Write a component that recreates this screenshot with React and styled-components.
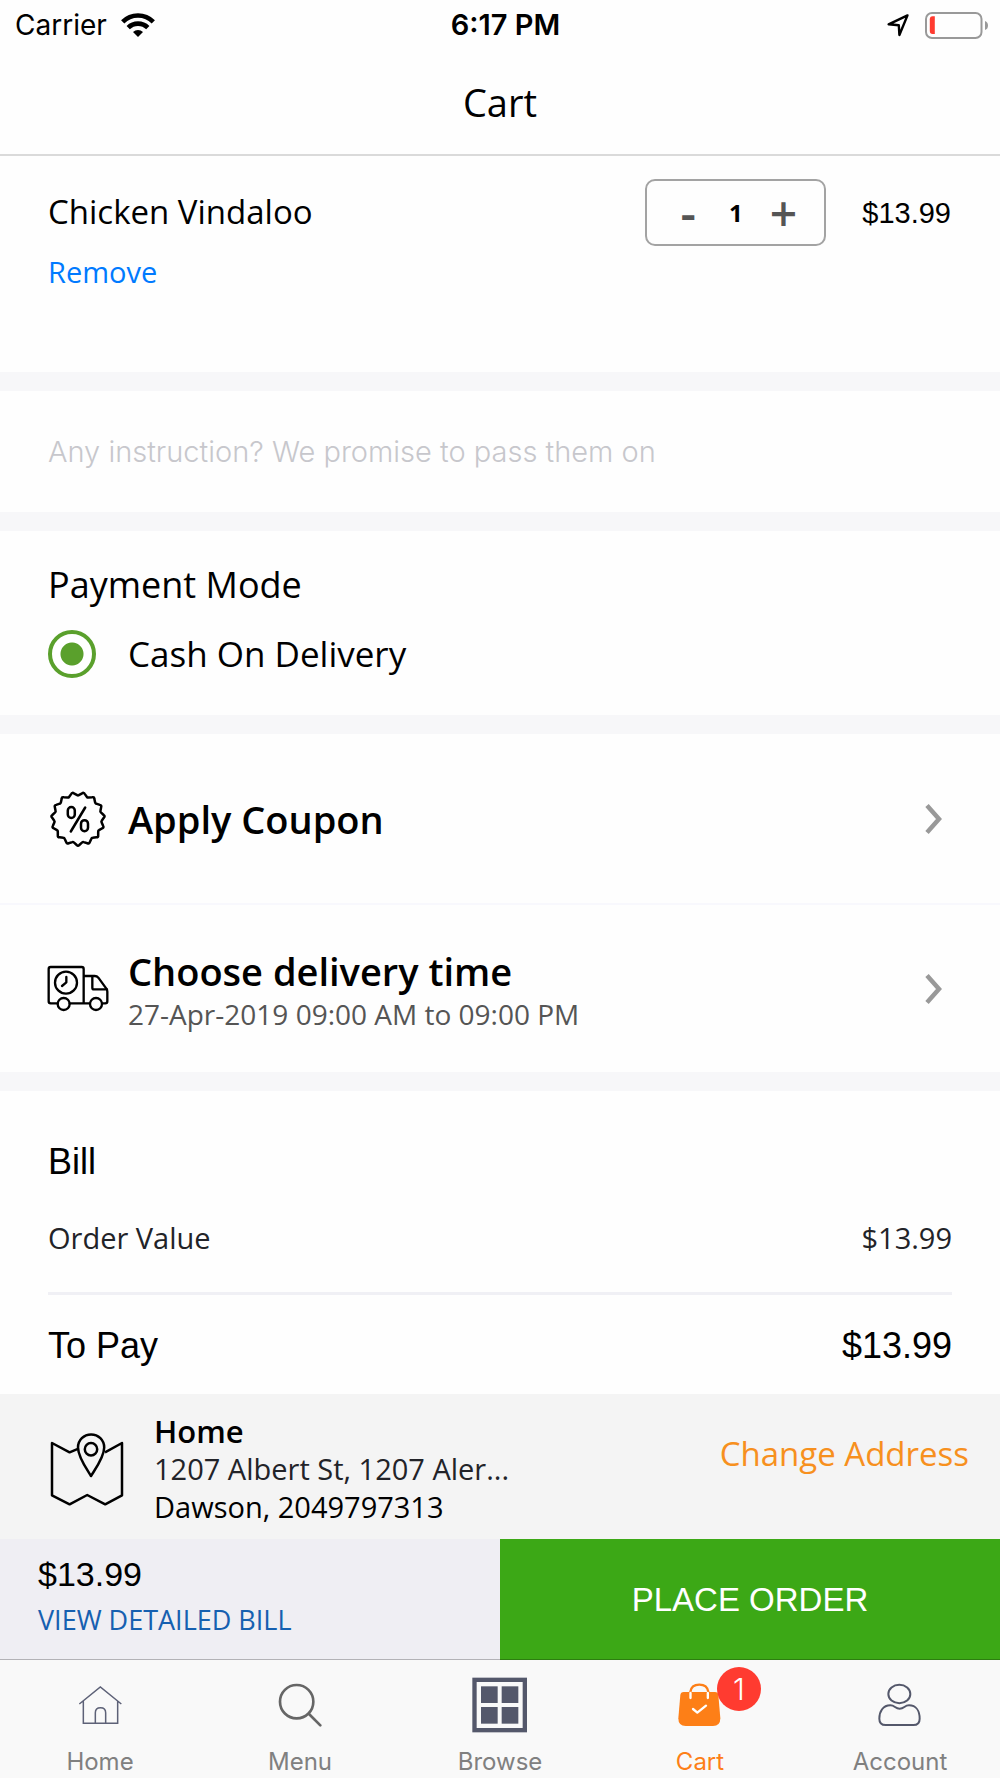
import React, { useState } from 'react';
import styled, { createGlobalStyle } from 'styled-components';

const sans = '"Open Sans", "Noto Sans", sans-serif';
const helvetica = '"Liberation Sans", Arial, sans-serif';
const system = 'Inter, Roboto, sans-serif';

const GlobalStyle = createGlobalStyle`
  *, *::before, *::after { box-sizing: border-box; }
  body { margin: 0; background: #fefefe; color: #000; font-family: ${sans}; }
  h1, h2, p, dl, dt, dd { margin: 0; font-weight: 400; }
  button { border: 0; padding: 0; background: none; color: inherit; font: inherit; cursor: pointer; }
  a { color: inherit; text-decoration: none; }
  svg { display: block; flex: none; }
`;

const Screen = styled.div`
  display: flex;
  flex-direction: column;
  min-height: 100vh;
`;

const StatusBar = styled.div`
  display: grid;
  grid-template-columns: 1fr auto 1fr;
  align-items: center;
  height: 50px;
  padding: 0 12px 0 15px;
  font: 400 28px/34px ${system};
`;

const StatusGroup = styled.div`
  display: flex;
  align-items: center;
  gap: 14px;
  justify-content: ${(p) => (p.$end ? 'flex-end' : 'flex-start')};
`;

const Clock = styled.time`
  padding-left: 8px;
  font-size: 29px;
  font-weight: 600;
`;

const Header = styled.header`
  display: flex;
  align-items: center;
  justify-content: center;
  height: 106px;
  border-bottom: 2px solid #dadada;
`;

const Title = styled.h1`
  font-size: 38px;
  line-height: 50px;
`;

const Content = styled.main`
  display: flex;
  flex-direction: column;
  gap: 19px;
  background: #f7f7f9;
`;

const Section = styled.section`
  background: #fefefe;
`;

const ItemSection = styled(Section)`
  display: flex;
  align-items: flex-start;
  gap: 36px;
  padding: 23px 49px 78px 48px;
`;

const ItemInfo = styled.div`
  display: flex;
  flex: 1;
  flex-direction: column;
  align-items: flex-start;
  gap: 16px;
  padding-top: 11px;
`;

const ItemName = styled.h2`
  font-size: 33px;
  line-height: 44px;
`;

const RemoveButton = styled.button`
  color: #007aff;
  font-size: 29px;
  line-height: 44px;
`;

const Stepper = styled.div`
  display: grid;
  grid-template-columns: repeat(3, 1fr);
  align-items: center;
  width: 181px;
  height: 67px;
  padding: 0 17px;
  border: 2px solid #a3a3a3;
  border-radius: 10px;
  text-align: center;
`;

const StepButton = styled.button`
  color: #555;
  font-size: 48px;
  font-weight: 600;
  line-height: 60px;
`;

const Quantity = styled.output`
  font-size: 24px;
  font-weight: 700;
  line-height: 60px;
`;

const ItemPrice = styled.span`
  font: 400 29px/69px ${helvetica};
`;

const InstructionInput = styled.input`
  display: block;
  width: 100%;
  height: 121px;
  padding: 0 48px;
  border: 0;
  outline: 0;
  background: transparent;
  color: #000;
  font: 300 29px/40px ${system};
  &::placeholder { color: #c7c7cc; opacity: 1; }
`;

const PaymentSection = styled(Section)`
  padding: 30px 48px 37px;
`;

const PaymentTitle = styled.h2`
  margin-bottom: 21px;
  font-size: 36px;
  line-height: 48px;
`;

const RadioLabel = styled.label`
  display: flex;
  align-items: center;
  gap: 32px;
  font-size: 35px;
  line-height: 48px;
`;

const Radio = styled.input`
  appearance: none;
  width: 48px;
  height: 48px;
  margin: 0;
  border: 4px solid #5aa02c;
  border-radius: 50%;
  background: #fff;
  &:checked { background: radial-gradient(circle, #5aa02c 11px, #fff 12px); }
`;

const OptionRow = styled.button`
  display: flex;
  align-items: center;
  gap: 20px;
  width: 100%;
  height: 169px;
  padding: 0 58px 0 48px;
  text-align: left;
  & + & { border-top: 2px solid #f8f8fd; }
`;

const OptionIcon = styled.span`
  display: flex;
  justify-content: center;
  width: 60px;
`;

const OptionText = styled.span`
  display: flex;
  flex: 1;
  flex-direction: column;
`;

const OptionTitle = styled.span`
  font-size: 38px;
  font-weight: 600;
  line-height: 50px;
`;

const OptionDetail = styled.span`
  color: #555;
  font-size: 28px;
  line-height: 36px;
`;

const BillSection = styled(Section)`
  padding: 49px 48px 26px;
`;

const BillTitle = styled.h2`
  font: 400 36px/44px ${helvetica};
`;

const BillRow = styled.div`
  display: flex;
  justify-content: space-between;
  padding: 32px 0;
  color: #222328;
  font-size: 29px;
  line-height: 44px;
`;

const TotalRow = styled(BillRow)`
  padding: 29px 0 0;
  border-top: 3px solid #f0f0f5;
  color: #000;
  font-family: ${helvetica};
  font-size: 36px;
`;

const AddressBar = styled.section`
  display: flex;
  align-items: center;
  gap: 28px;
  padding: 18px 31px 13px 48px;
  background: #f4f4f4;
`;

const Address = styled.address`
  flex: 1;
  font-size: 29px;
  font-style: normal;
  line-height: 38px;
`;

const AddressName = styled.h2`
  && { font-weight: 600; }
  font-size: 31px;
`;

const AddressStreet = styled.p`
  color: #222328;
`;

const ChangeLink = styled.a`
  margin-bottom: 30px;
  color: #f7901e;
  font-size: 33px;
  line-height: 44px;
`;

const Checkout = styled.div`
  display: grid;
  grid-template-columns: 1fr 1fr;
  height: 121px;
  background: #efeef3;
`;

const Summary = styled.div`
  padding: 12px 38px 0;
`;

const SummaryPrice = styled.p`
  font: 400 34px/46px ${helvetica};
`;

const DetailLink = styled.a`
  display: block;
  color: #1660b0;
  font-size: 27px;
  line-height: 46px;
`;

const OrderButton = styled.button`
  background: #3ca816;
  color: #fff;
  font: 400 33px/46px ${helvetica};
`;

const TabBar = styled.nav`
  position: relative;
  display: grid;
  grid-template-columns: repeat(5, 1fr);
  flex: 1;
  margin-top: -1px;
  border-top: 1px solid rgba(0, 0, 0, 0.25);
  background: #f9f9f9;
  background-clip: padding-box;
`;

const Tab = styled.a`
  display: flex;
  flex-direction: column;
  align-items: center;
  gap: 14px;
  padding-top: 17px;
  color: ${(p) => (p.$active ? '#fd7f17' : '#808080')};
  font: 400 24px/30px ${system};
`;

const TabIcon = styled.span`
  position: relative;
  width: 56px;
  height: 56px;
`;

const Badge = styled.span`
  position: absolute;
  top: -10px;
  left: 45px;
  width: 44px;
  height: 44px;
  border-radius: 50%;
  background: #ff3b30;
  color: #fff;
  font: 300 30px/44px ${system};
  text-align: center;
`;

const WifiIcon = () => (
  <svg width="34" height="25" viewBox="0 0 34 25" fill="none" stroke="#000" aria-hidden="true">
    <path d="M1.7 8.9a21.5 21.5 0 0 1 30.6 0" strokeWidth="4.6" />
    <path d="M7.2 14.6a14 14 0 0 1 19.6 0" strokeWidth="4.6" />
    <path d="M12 19a7.4 7.4 0 0 1 10 0l-5 5z" fill="#000" stroke="none" />
  </svg>
);

const LocationIcon = () => (
  <svg width="24" height="23" viewBox="0 0 24 23" fill="none" stroke="#000" strokeWidth="2.4" strokeLinejoin="round" aria-hidden="true">
    <path d="M20.5 1.4L1.6 10.3l10.2 1L12.4 21z" />
  </svg>
);

const BatteryIcon = () => (
  <svg width="63" height="27" viewBox="0 0 63 27" aria-hidden="true">
    <rect x="1" y="1" width="55.500" height="25" rx="6" fill="none" stroke="#999" strokeWidth="2" />
    <path d="M9.800 4.200v17.800h-2.300q-2.700 0-2.700-3V7.200q0-3 2.700-3z" fill="#ff3b30" />
    <path d="M60 9q3 1 3 4.500T60 18z" fill="#999" />
  </svg>
);

const LOBES = 15;
const sealPath = Array.from({ length: LOBES }, (_, i) => {
  const at = (r, turn) => {
    const a = Math.PI / 2 + ((i + turn) / LOBES) * Math.PI * 2;
    return `${(30 + r * Math.cos(a)).toFixed(2)} ${(30 + r * Math.sin(a)).toFixed(2)}`;
  };
  return `${i ? 'L' : 'M'}${at(26, -0.12)}Q${at(27.5, 0)} ${at(26, 0.12)}L${at(23.8, 0.42)}Q${at(23.3, 0.5)} ${at(23.8, 0.58)}`;
}).join('') + 'Z';

const CouponIcon = () => (
  <svg width="60" height="60" viewBox="0 0 60 60" fill="none" stroke="#000" strokeWidth="2.500" strokeLinecap="round" strokeLinejoin="round" aria-hidden="true">
    <path d={sealPath} />
    <path d="M37.200 18.500L22.800 42.500" />
    <rect x="19.800" y="18" width="7" height="11" rx="3.500" />
    <rect x="33" y="31.200" width="7" height="11" rx="3.500" />
  </svg>
);

const TruckIcon = () => (
  <svg width="62" height="47" viewBox="22 52 186 141" fill="none" stroke="#000" strokeWidth="7" strokeLinecap="round" strokeLinejoin="round" aria-hidden="true">
    <path d="M54 167H33q-6 0-6-6V64q0-6 6-6h93q6 0 6 6v103M90 167h60M133 85h32q7 0 11 5l24 33q3 4 3 9v29q0 6-6 6h-9" />
    <path d="M158 86v34q0 5 5 5h39" />
    <circle cx="72" cy="169" r="18" />
    <circle cx="169" cy="169" r="18" />
    <circle cx="79" cy="105" r="33" />
    <path d="M80 88v16l-13 11" />
  </svg>
);

const ChevronIcon = () => (
  <svg width="17" height="30" viewBox="0 0 17 30" fill="none" stroke="#999" strokeWidth="4.500" aria-hidden="true">
    <path d="M2 1.500L14 15 2 28.500" />
  </svg>
);

const MapIcon = () => (
  <svg width="78" height="74" viewBox="48 51 78 74" fill="none" stroke="#000" strokeWidth="2.500" strokeLinejoin="round" aria-hidden="true">
    <path d="M78.500 67.700L69.600 71.300 52 62v52.300l17.600 9 17.600-9.300 18 9.300L122 114.300V62l-17 9.300" />
    <path d="M91 95C86 87 78 76 78 66.500a13 13 0 0 1 26.200 0C104.200 76 96 87 91 95z" />
    <circle cx="91" cy="68.300" r="6.200" />
  </svg>
);

const HomeIcon = () => (
  <svg width="56" height="56" viewBox="216 81 168 168" fill="none" stroke="#5d6177" strokeWidth="4.500" aria-hidden="true">
    <path d="M238 162l63-51 63 51M250 152v68h103v-68M286 220v-32q0-15 15.500-15t15.500 15v32" />
  </svg>
);

const SearchIcon = () => (
  <svg width="56" height="56" viewBox="816 81 168 168" fill="none" stroke="#666" strokeWidth="8" strokeLinecap="round" aria-hidden="true">
    <circle cx="890" cy="155" r="50" />
    <path d="M927 192l34 34" />
  </svg>
);

const BrowseIcon = () => (
  <svg width="56" height="56" viewBox="1416 81 168 168" fill="#54586b" aria-hidden="true">
    <rect x="1423.500" y="89.500" width="151" height="151" fill="none" stroke="#54586b" strokeWidth="13" />
    <rect x="1443" y="109" width="50" height="50" />
    <rect x="1505" y="109" width="50" height="50" />
    <rect x="1443" y="171" width="50" height="50" />
    <rect x="1505" y="171" width="50" height="50" />
  </svg>
);

const CartIcon = () => (
  <svg width="56" height="56" viewBox="516 81 168 168" fill="none" strokeLinecap="round" strokeLinejoin="round" aria-hidden="true">
    <path d="M551 126h94q9 0 10 9l6 70q0 23-22 23h-82q-22 0-22-23l6-70q1-9 10-9z" fill="#fd7f17" />
    <path d="M571 126q3-22 27-22t27 22" stroke="#fd7f17" strokeWidth="7" />
    <path d="M571.500 129v15M623.500 129v15M579 177l13 11 26-21" stroke="#fff" strokeWidth="7" />
  </svg>
);

const AccountIcon = () => (
  <svg width="56" height="56" viewBox="1116 81 168 168" fill="none" stroke="#54586b" strokeWidth="6" strokeLinejoin="round" aria-hidden="true">
    <ellipse cx="1198" cy="132" rx="33" ry="28" />
    <path d="M1171 166c14 0 14 10 28 10s14-10 28-10c22 0 32 18 32 40q0 19-19 19h-83q-19 0-19-19c0-22 11-40 33-40z" />
  </svg>
);

const tabs = [
  { label: 'Home', Icon: HomeIcon },
  { label: 'Menu', Icon: SearchIcon },
  { label: 'Browse', Icon: BrowseIcon },
  { label: 'Cart', Icon: CartIcon, active: true },
  { label: 'Account', Icon: AccountIcon },
];

export default function App() {
  const [quantity, setQuantity] = useState(1);
  const [note, setNote] = useState('');
  const price = `$${(quantity * 13.99).toFixed(2)}`;

  return (
    <Screen>
      <GlobalStyle />
      <StatusBar>
        <StatusGroup>
          <span>Carrier</span>
          <WifiIcon />
        </StatusGroup>
        <Clock>6:17 PM</Clock>
        <StatusGroup $end>
          <LocationIcon />
          <BatteryIcon />
        </StatusGroup>
      </StatusBar>
      <Header>
        <Title>Cart</Title>
      </Header>

      <Content>
        <ItemSection>
          <ItemInfo>
            <ItemName>Chicken Vindaloo</ItemName>
            <RemoveButton type="button">Remove</RemoveButton>
          </ItemInfo>
          <Stepper>
            <StepButton type="button" aria-label="Decrease quantity" onClick={() => setQuantity(Math.max(1, quantity - 1))}>-</StepButton>
            <Quantity>{quantity}</Quantity>
            <StepButton type="button" aria-label="Increase quantity" onClick={() => setQuantity(quantity + 1)}>+</StepButton>
          </Stepper>
          <ItemPrice>{price}</ItemPrice>
        </ItemSection>

        <Section>
          <InstructionInput
            aria-label="Instructions"
            placeholder="Any instruction? We promise to pass them on"
            value={note}
            onChange={(e) => setNote(e.target.value)}
          />
        </Section>

        <PaymentSection>
          <PaymentTitle>Payment Mode</PaymentTitle>
          <RadioLabel>
            <Radio type="radio" name="payment" defaultChecked />
            Cash On Delivery
          </RadioLabel>
        </PaymentSection>

        <Section>
          <OptionRow type="button">
            <OptionIcon><CouponIcon /></OptionIcon>
            <OptionText>
              <OptionTitle>Apply Coupon</OptionTitle>
            </OptionText>
            <ChevronIcon />
          </OptionRow>
          <OptionRow type="button">
            <OptionIcon><TruckIcon /></OptionIcon>
            <OptionText>
              <OptionTitle>Choose delivery time</OptionTitle>
              <OptionDetail>27-Apr-2019 09:00 AM to 09:00 PM</OptionDetail>
            </OptionText>
            <ChevronIcon />
          </OptionRow>
        </Section>

        <BillSection>
          <BillTitle>Bill</BillTitle>
          <dl>
            <BillRow>
              <dt>Order Value</dt>
              <dd>{price}</dd>
            </BillRow>
            <TotalRow>
              <dt>To Pay</dt>
              <dd>{price}</dd>
            </TotalRow>
          </dl>
        </BillSection>
      </Content>

      <AddressBar>
        <MapIcon />
        <Address>
          <AddressName>Home</AddressName>
          <AddressStreet>1207 Albert St, 1207 Aler...</AddressStreet>
          <p>Dawson, 2049797313</p>
        </Address>
        <ChangeLink href="#address">Change Address</ChangeLink>
      </AddressBar>

      <Checkout>
        <Summary>
          <SummaryPrice>{price}</SummaryPrice>
          <DetailLink href="#bill">VIEW DETAILED BILL</DetailLink>
        </Summary>
        <OrderButton type="button">PLACE ORDER</OrderButton>
      </Checkout>

      <TabBar>
        {tabs.map(({ label, Icon, active }) => (
          <Tab key={label} href={`#${label.toLowerCase()}`} $active={active}>
            <TabIcon>
              <Icon />
              {active && <Badge>{quantity}</Badge>}
            </TabIcon>
            {label}
          </Tab>
        ))}
      </TabBar>
    </Screen>
  );
}
